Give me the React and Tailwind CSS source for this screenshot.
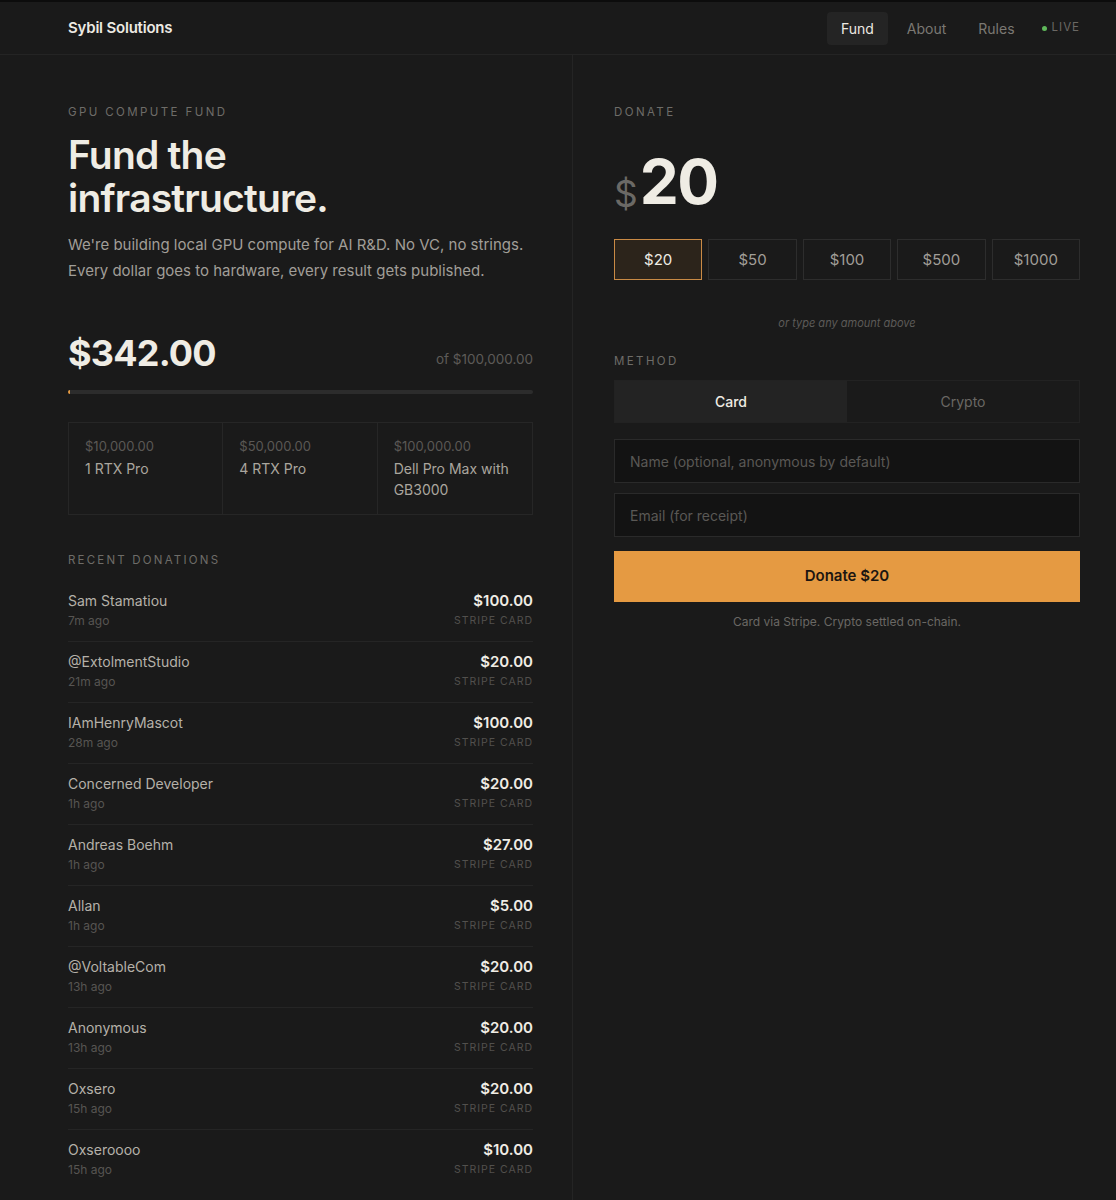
import React from "react";

const donations = [
  ["Sam Stamatiou", "7m ago", "$100.00"],
  ["@ExtolmentStudio", "21m ago", "$20.00"],
  ["IAmHenryMascot", "28m ago", "$100.00"],
  ["Concerned Developer", "1h ago", "$20.00"],
  ["Andreas Boehm", "1h ago", "$27.00"],
  ["Allan", "1h ago", "$5.00"],
  ["@VoltableCom", "13h ago", "$20.00"],
  ["Anonymous", "13h ago", "$20.00"],
  ["Oxsero", "15h ago", "$20.00"],
  ["Oxseroooo", "15h ago", "$10.00"],
];

const milestones = [
  ["$10,000.00", "1 RTX Pro"],
  ["$50,000.00", "4 RTX Pro"],
  ["$100,000.00", "Dell Pro Max with GB3000"],
];

const amounts = ["$20", "$50", "$100", "$500", "$1000"];

export default function App() {
  return (
    <div
      className="min-h-[1200px] bg-[#1a1a1a] text-[#ece9e2]"
      style={{ fontFamily: "Inter, 'Noto Sans', sans-serif" }}
    >
      <div className="h-[2px] bg-[#0c0c0c]" />
      <header className="h-[53px] border-b border-[#242424] flex items-center justify-between pl-[68px] pr-[36px]">
        <div className="text-[15px] font-semibold tracking-[-0.2px] text-[#ece9e2]">Sybil Solutions</div>
        <nav className="flex items-center text-[14px]">
          <span className="px-[14px] py-[6px] rounded-[4px] bg-[#242424] text-[#ece9e2]">Fund</span>
          <span className="ml-[19px] text-[#7b7873]">About</span>
          <span className="ml-[32px] text-[#7b7873]">Rules</span>
          <span className="ml-[27px] flex items-center gap-[5px] text-[11.5px] tracking-[1px] text-[#6a6864]">
            <span className="w-[5px] h-[5px] rounded-full bg-[#5fb85a]" />
            LIVE
          </span>
        </nav>
      </header>

      <div className="flex">
        <section className="ml-[28px] w-[545px] shrink-0 border-r border-[#242424] pl-[40px] pr-[39px] pt-[49px] pb-[20px] min-h-[1145px]">
          <div className="text-[11.5px] tracking-[2.4px] text-[#6e6c68]">GPU COMPUTE FUND</div>
          <h1 className="mt-[12px] text-[39px] leading-[43px] font-semibold tracking-[-0.8px] text-[#efece4]">
            Fund the
            <br />
            infrastructure.
          </h1>
          <p className="mt-[13px] text-[15px] leading-[26px] text-[#a19e98] whitespace-nowrap">
            We're building local GPU compute for AI R&amp;D. No VC, no strings.
            <br />
            Every dollar goes to hardware, every result gets published.
          </p>

          <div className="mt-[47px] flex items-end justify-between">
            <div className="text-[36px] leading-[44px] font-bold tracking-[-0.8px] text-[#efece4]">$342.00</div>
            <div className="text-[13.5px] text-[#5d5b58] mb-[6px]">of $100,000.00</div>
          </div>
          <div className="mt-[15px] h-[4px] bg-[#2c2c2c] rounded-full overflow-hidden">
            <div className="h-full bg-[#e59a42]" style={{ width: "0.5%" }} />
          </div>

          <div className="mt-[28px] grid grid-cols-3 border border-[#262626] h-[93px]">
            {milestones.map(([p, n], i) => (
              <div
                key={p}
                className={`px-[16px] pt-[14px] ${i < 2 ? "border-r border-[#262626]" : ""}`}
              >
                <div className="text-[13px] leading-[18px] text-[#5a5855]">{p}</div>
                <div className="mt-[3px] text-[14px] leading-[21px] text-[#aaa69e]">{n}</div>
              </div>
            ))}
          </div>

          <div className="mt-[37px] text-[11.5px] tracking-[2.2px] text-[#6e6c68]">RECENT DONATIONS</div>
          <div className="mt-[11px]">
            {donations.map(([name, t, amt], i) => (
              <div
                key={i}
                className={`flex justify-between py-[10px] ${i > 0 ? "border-t border-[#252525]" : ""}`}
              >
                <div>
                  <div className="text-[14px] leading-[20px] text-[#b5b1a9]">{name}</div>
                  <div className="text-[12px] leading-[20px] text-[#575552]">{t}</div>
                </div>
                <div className="text-right">
                  <div className="text-[15px] leading-[20px] font-semibold text-[#efece4]">{amt}</div>
                  <div className="text-[10.5px] leading-[20px] tracking-[1px] text-[#52504d]">STRIPE CARD</div>
                </div>
              </div>
            ))}
          </div>
        </section>

        <section className="flex-1 pl-[41px] pr-[36px] pt-[49px]">
          <div className="text-[11.5px] tracking-[2.4px] text-[#6e6c68]">DONATE</div>
          <div className="mt-[26px] flex items-end h-[70px]">
            <span className="text-[37px] leading-[44px] text-[#6b6965] mb-[1px]">$</span>
            <span className="ml-[2px] text-[62px] leading-[70px] font-bold tracking-[-1.5px] text-[#efece4]">20</span>
          </div>
          <div className="mt-[22px] grid grid-cols-5 gap-[6px]">
            {amounts.map((a, i) => (
              <div
                key={a}
                className={`h-[41px] flex items-center justify-center text-[15px] border ${
                  i === 0
                    ? "border-[#c98a45] bg-[#2c241b] text-[#efece4]"
                    : "border-[#2d2d2d] text-[#a19e98]"
                }`}
              >
                {a}
              </div>
            ))}
          </div>
          <div className="mt-[35px] text-center text-[11px] italic text-[#5d5b58]">or type any amount above</div>

          <div className="mt-[21px] text-[11.5px] tracking-[2.4px] text-[#6e6c68]">METHOD</div>
          <div className="mt-[10px] grid grid-cols-2 border border-[#222] h-[43px]">
            <div className="flex items-center justify-center bg-[#232323] text-[14px] font-medium text-[#efece4]">Card</div>
            <div className="flex items-center justify-center text-[14px] text-[#6a6864]">Crypto</div>
          </div>
          <div className="mt-[16px] h-[44px] border border-[#2a2a2a] bg-[#131313] flex items-center px-[15px] text-[14px] text-[#5a5855]">
            Name (optional, anonymous by default)
          </div>
          <div className="mt-[10px] h-[44px] border border-[#2a2a2a] bg-[#131313] flex items-center px-[15px] text-[14px] text-[#5a5855]">
            Email (for receipt)
          </div>
          <div className="mt-[14px] h-[51px] bg-[#e59a42] flex items-center justify-center text-[15px] font-semibold text-[#1c1611]">
            Donate $20
          </div>
          <div className="mt-[11px] text-center text-[12px] text-[#6a6864]">Card via Stripe. Crypto settled on-chain.</div>
        </section>
      </div>
    </div>
  );
}
